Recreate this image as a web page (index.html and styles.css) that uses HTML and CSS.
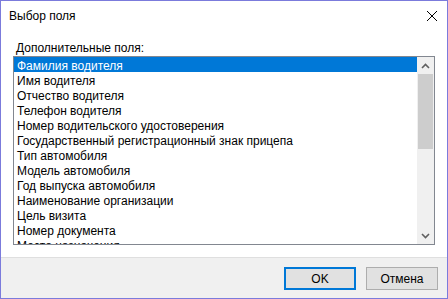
FILE: index.html
```html
<!DOCTYPE html>
<html lang="ru">
<head>
    <meta charset="UTF-8">
    <meta name="viewport" content="width=device-width, initial-scale=1.0">
    <title>Выбор поля</title>
    <link rel="stylesheet" href="styles.css">
</head>
<body>
    <div class="window">
        <div class="title-bar">
            <span class="title">Выбор поля</span>
            <svg class="close" width="12" height="12" viewBox="0 0 12 12">
                <path d="M1 1 L11 11 M11 1 L1 11" stroke="#000" stroke-width="1" fill="none"/>
            </svg>
        </div>
        <div class="content">
            <div class="label">Дополнительные поля:</div>
            <div class="listbox">
                <div class="items">
                    <div class="item selected">Фамилия водителя</div>
                    <div class="item">Имя водителя</div>
                    <div class="item">Отчество водителя</div>
                    <div class="item">Телефон водителя</div>
                    <div class="item">Номер водительского удостоверения</div>
                    <div class="item">Государственный регистрационный знак прицепа</div>
                    <div class="item">Тип автомобиля</div>
                    <div class="item">Модель автомобиля</div>
                    <div class="item">Год выпуска автомобиля</div>
                    <div class="item">Наименование организации</div>
                    <div class="item">Цель визита</div>
                    <div class="item">Номер документа</div>
                    <div class="item">Место назначения</div>
                </div>
                <div class="scrollbar">
                    <div class="arrow">
                        <svg width="9" height="6" viewBox="0 0 9 6"><polyline points="1,5 4.5,1.5 8,5" stroke="#606060" stroke-width="1.6" fill="none"/></svg>
                    </div>
                    <div class="track">
                        <div class="thumb"></div>
                    </div>
                    <div class="arrow">
                        <svg width="9" height="6" viewBox="0 0 9 6"><polyline points="1,1 4.5,4.5 8,1" stroke="#606060" stroke-width="1.6" fill="none"/></svg>
                    </div>
                </div>
            </div>
        </div>
        <div class="footer">
            <button class="btn default">OK</button>
            <button class="btn">Отмена</button>
        </div>
    </div>
</body>
</html>
```

FILE: styles.css
```css
body {
    margin: 0;
    font-family: "Liberation Sans", Arial, sans-serif;
    font-size: 12px;
    color: #000;
}
.window {
    width: 448px;
    height: 299px;
    box-sizing: border-box;
    border: 1px solid #7b7bdc;
    background-color: #fff;
    display: flex;
    flex-direction: column;
}
.title-bar {
    height: 30px;
    flex-shrink: 0;
    display: flex;
    align-items: center;
    justify-content: space-between;
    padding: 0 9px 0 8px;
}
.title {
    font-size: 12px;
    margin-top: -1px;
}
.close {
    margin-top: -1px;
}
.content {
    flex: 1;
    padding: 9px 12px 0 12px;
}
.label {
    padding-left: 3px;
    height: 16px;
    line-height: 16px;
}
.listbox {
    height: 189px;
    box-sizing: border-box;
    border: 1px solid #828790;
    display: flex;
    overflow: hidden;
}
.items {
    flex: 1;
    overflow: hidden;
}
.item {
    height: 15px;
    box-sizing: border-box;
    padding: 1px 0 0 3px;
    line-height: 16px;
    white-space: nowrap;
}
.selected {
    background-color: #0078d7;
    color: #fff;
}
.scrollbar {
    width: 17px;
    background-color: #f0f0f0;
    display: flex;
    flex-direction: column;
}
.arrow {
    height: 17px;
    display: flex;
    align-items: center;
    justify-content: center;
}
.track {
    flex: 1;
}
.thumb {
    height: 75px;
    margin: 0 1px;
    background-color: #cdcdcd;
}
.footer {
    height: 41px;
    flex-shrink: 0;
    box-sizing: border-box;
    border-top: 1px solid #dfdfdf;
    background-color: #f0f0f0;
    display: flex;
    justify-content: flex-end;
    align-items: flex-start;
    gap: 10px;
    padding: 9px 9px 0 0;
}
.btn {
    width: 72px;
    height: 23px;
    box-sizing: border-box;
    border: 1px solid #adadad;
    background-color: #e1e1e1;
    font-family: "Liberation Sans", Arial, sans-serif;
    font-size: 12px;
    color: #000;
    padding: 0;
}
.default {
    border: 2px solid #0078d7;
}
```
